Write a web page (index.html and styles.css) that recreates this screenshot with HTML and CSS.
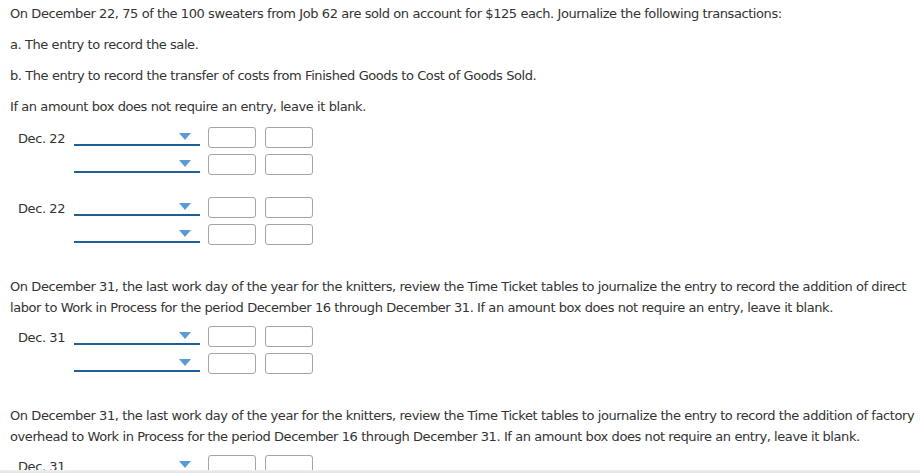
FILE: index.html
```html
<!DOCTYPE html>
<html>
<head>
<meta charset="utf-8">
<link rel="stylesheet" href="styles.css">
</head>
<body>
<div class="page">
  <p class="para">On December 22, 75 of the 100 sweaters from Job 62 are sold on account for $125 each. Journalize the following transactions:</p>
  <p class="para">a. The entry to record the sale.</p>
  <p class="para">b. The entry to record the transfer of costs from Finished Goods to Cost of Goods Sold.</p>
  <p class="para">If an amount box does not require an entry, leave it blank.</p>

  <div class="journal">
    <div class="row"><span class="date">Dec. 22</span><span class="select"><span class="tri"></span></span><span class="box"></span><span class="box"></span></div>
    <div class="row"><span class="date"></span><span class="select"><span class="tri"></span></span><span class="box"></span><span class="box"></span></div>
  </div>
  <div class="journal">
    <div class="row"><span class="date">Dec. 22</span><span class="select"><span class="tri"></span></span><span class="box"></span><span class="box"></span></div>
    <div class="row"><span class="date"></span><span class="select"><span class="tri"></span></span><span class="box"></span><span class="box"></span></div>
  </div>

  <p class="para wide">On December 31, the last work day of the year for the knitters, review the Time Ticket tables to journalize the entry to record the addition of direct labor to Work in Process for the period December 16 through December 31. If an amount box does not require an entry, leave it blank.</p>
  <div class="journal">
    <div class="row"><span class="date">Dec. 31</span><span class="select"><span class="tri"></span></span><span class="box"></span><span class="box"></span></div>
    <div class="row"><span class="date"></span><span class="select"><span class="tri"></span></span><span class="box"></span><span class="box"></span></div>
  </div>

  <p class="para wide">On December 31, the last work day of the year for the knitters, review the Time Ticket tables to journalize the entry to record the addition of factory overhead to Work in Process for the period December 16 through December 31. If an amount box does not require an entry, leave it blank.</p>
  <div class="journal">
    <div class="row"><span class="date">Dec. 31</span><span class="select"><span class="tri"></span></span><span class="box"></span><span class="box"></span></div>
    <div class="row"><span class="date"></span><span class="select"><span class="tri"></span></span><span class="box"></span><span class="box"></span></div>
  </div>
</div>
<div class="bottom-shade"></div>
</body>
</html>
```

FILE: styles.css
```css
html, body {
  margin: 0;
  padding: 0;
  background: #fff;
}
body {
  font-family: "DejaVu Sans", Verdana, sans-serif;
  font-size: 13px;
  letter-spacing: -0.42px;
  color: #333;
  overflow: hidden;
}
.page {
  padding: 3px 4px 0 10px;
}
.para {
  margin: 0 0 10px 0;
  line-height: 21px;
}
.wide {
  margin-top: 31px;
}
.journal {
  display: flex;
  flex-direction: column;
  gap: 6px;
  padding-left: 8px;
  margin-bottom: 22px;
}
.wide + .journal {
  margin-top: -2px;
}
.row {
  display: flex;
  align-items: center;
  height: 21px;
}
.date {
  width: 56px;
  flex: none;
  padding-top: 1px;
}
.select {
  position: relative;
  width: 126px;
  height: 17px;
  border-bottom: 2px solid #1d5f96;
  align-self: flex-start;
  flex: none;
}
.tri {
  position: absolute;
  right: 9px;
  top: 6px;
  width: 0;
  height: 0;
  border-left: 6px solid transparent;
  border-right: 6px solid transparent;
  border-top: 7px solid #5b9bd5;
}
.box {
  width: 46px;
  height: 19px;
  border: 1px solid #a5a5a5;
  border-radius: 3px;
  box-shadow: inset 0 0 1px rgba(0,0,0,0.1);
  margin-left: 8px;
  flex: none;
}
.box + .box {
  margin-left: 9px;
}
.bottom-shade {
  position: fixed;
  left: 0;
  right: 0;
  bottom: 0;
  height: 3px;
  background: linear-gradient(#f0f0f0, #e2e2e2);
}
```
